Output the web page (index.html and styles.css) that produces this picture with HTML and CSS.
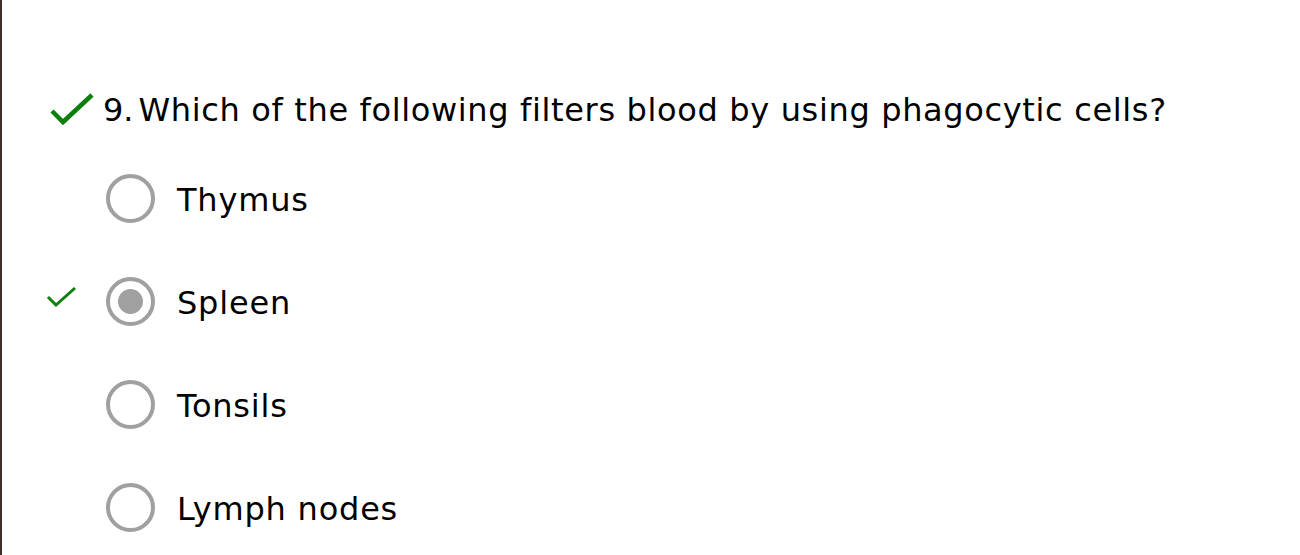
FILE: index.html
```html
<!DOCTYPE html>
<html>
<head>
<meta charset="utf-8">
<link rel="stylesheet" href="styles.css">
</head>
<body>
<div class="page">
  <div class="question">
    <svg class="big-check" width="48" height="36" viewBox="0 0 48 36"><path d="M4 20 L15 31 L44 4" fill="none" stroke="#0c7f0c" stroke-width="4.5"/></svg>
    <span class="qnum">9.</span>
    <span class="qtext">Which of the following filters blood by using phagocytic cells?</span>
  </div>
  <ul class="options">
    <li class="option">
      <span class="mark"></span>
      <span class="radio"></span>
      <span class="label">Thymus</span>
    </li>
    <li class="option">
      <span class="mark"><svg width="32" height="24" viewBox="0 0 32 24"><path d="M2 12 L10 20 L29 3" fill="none" stroke="#0c7f0c" stroke-width="3"/></svg></span>
      <span class="radio checked"></span>
      <span class="label">Spleen</span>
    </li>
    <li class="option">
      <span class="mark"></span>
      <span class="radio"></span>
      <span class="label">Tonsils</span>
    </li>
    <li class="option">
      <span class="mark"></span>
      <span class="radio"></span>
      <span class="label">Lymph nodes</span>
    </li>
  </ul>
</div>
</body>
</html>
```
FILE: styles.css
```css
html, body {
  margin: 0;
  padding: 0;
  background: #fff;
}
body {
  font-family: "DejaVu Sans", Verdana, sans-serif;
  color: #000;
  font-variant-ligatures: none;
}
.page {
  border-left: 2px solid #3b2f28;
  height: 555px;
  box-sizing: border-box;
  padding-top: 88px;
}
.question {
  display: flex;
  align-items: center;
  height: 44px;
  padding-left: 46px;
}
.big-check {
  margin-right: 7px;
  margin-top: -2px;
}
.qnum {
  font-size: 32px;
  margin-right: 5px;
}
.qtext {
  font-size: 32px;
  letter-spacing: 0.65px;
}
.options {
  list-style: none;
  margin: 0;
  padding: 0;
  padding-top: 42px;
  display: flex;
  flex-direction: column;
  gap: 54px;
}
.option {
  display: flex;
  align-items: center;
  height: 49px;
}
.mark {
  width: 104px;
  padding-left: 44px;
  box-sizing: border-box;
  display: flex;
  align-items: center;
  margin-top: -9px;
}
.radio {
  width: 49px;
  height: 49px;
  border: 4px solid #a0a0a0;
  border-radius: 50%;
  box-sizing: border-box;
  display: flex;
  align-items: center;
  justify-content: center;
}
.radio.checked::after {
  content: "";
  width: 25px;
  height: 25px;
  border-radius: 50%;
  background: #a0a0a0;
}
.label {
  font-size: 32px;
  letter-spacing: 0.8px;
  margin-left: 22px;
  padding-top: 3px;
}
```
